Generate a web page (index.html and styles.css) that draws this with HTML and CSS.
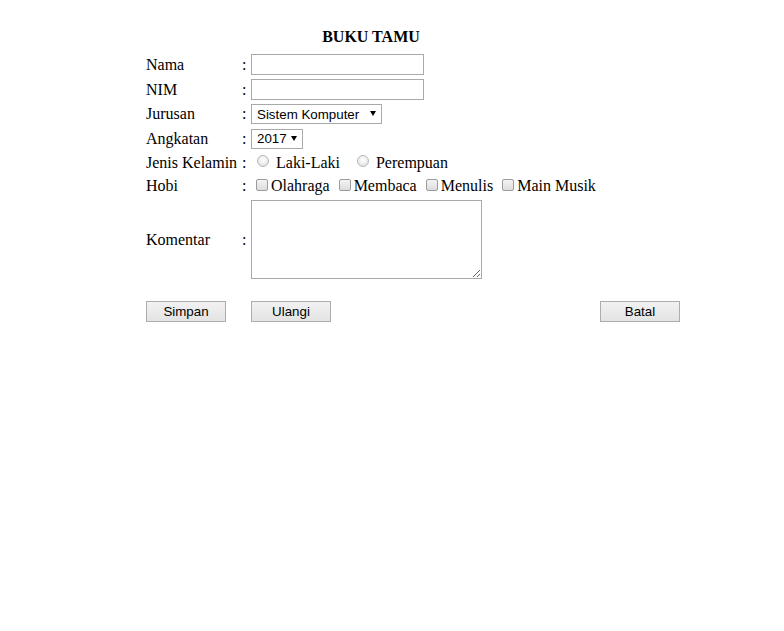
FILE: index.html
```html
<!DOCTYPE html>
<html>
<head>
<meta charset="utf-8">
<title>Buku Tamu</title>
<link rel="stylesheet" href="styles.css">
</head>
<body>
<div class="page">
  <h1 class="title">BUKU TAMU</h1>
  <form class="form">
    <div class="lbl r1">Nama</div><div class="colon r1">:</div>
    <div class="field r1"><input class="text" type="text"></div>

    <div class="lbl r2">NIM</div><div class="colon r2">:</div>
    <div class="field r2"><input class="text" type="text"></div>

    <div class="lbl r3">Jurusan</div><div class="colon r3">:</div>
    <div class="field r3"><select class="sel sel-jur"><option>Sistem Komputer</option></select></div>

    <div class="lbl r4">Angkatan</div><div class="colon r4">:</div>
    <div class="field r4"><select class="sel sel-year"><option>2017</option></select></div>

    <div class="lbl r5">Jenis Kelamin</div><div class="colon r5">:</div>
    <div class="field r5"><label class="opt"><input class="radio" type="radio" name="jk"> Laki-Laki</label> <label class="opt"><input class="radio" type="radio" name="jk"> Perempuan</label></div>

    <div class="lbl r6">Hobi</div><div class="colon r6">:</div>
    <div class="field r6"><label class="opt"><input class="check" type="checkbox">Olahraga</label> <label class="opt"><input class="check" type="checkbox">Membaca</label> <label class="opt"><input class="check" type="checkbox">Menulis</label> <label class="opt"><input class="check" type="checkbox">Main Musik</label></div>

    <div class="lbl r7">Komentar</div><div class="colon r7">:</div>
    <div class="field r7"><textarea class="area"></textarea></div>

    <div class="lbl r8"><button type="button" class="btn">Simpan</button></div>
    <div class="colon r8"></div>
    <div class="field r8 btnrow"><button type="button" class="btn">Ulangi</button><button type="button" class="btn">Batal</button></div>
  </form>
</div>
</body>
</html>
```

FILE: styles.css
```css
html, body {
  margin: 0;
  padding: 0;
  background: #ffffff;
}
body {
  font-family: "Liberation Serif", "Times New Roman", serif;
  font-size: 16px;
  color: #000;
}
.page {
  padding: 28px 0 0 146px;
}
.title {
  margin: 0;
  width: 450px;
  text-align: center;
  font-size: 16px;
  line-height: 18px;
  font-weight: bold;
}
.form {
  margin-top: 6px;
  display: grid;
  grid-template-columns: 96px 9px 429px;
  grid-template-rows: 25px 25px 24px 25px 23px 24px 83px 20px 21px;
  align-items: center;
}
.r8 { grid-row: 9; }
.lbl, .colon, .field {
  line-height: 18px;
  white-space: nowrap;
}
.field {
  display: flex;
  align-items: center;
}
.text {
  box-sizing: border-box;
  width: 173px;
  height: 21px;
  margin: 0;
  border: 1px solid #a9a9a9;
  padding: 1px 2px;
  font-family: "Liberation Sans", Arial, sans-serif;
  font-size: 13.33px;
  background: #fff;
}
.sel {
  -webkit-appearance: none;
  appearance: none;
  box-sizing: border-box;
  height: 20px;
  margin: 0;
  border: 1px solid #a9a9a9;
  border-radius: 0;
  padding: 0 0 0 5px;
  font-family: "Liberation Sans", Arial, sans-serif;
  font-size: 13.33px;
  color: #000;
  background-color: #fff;
  background-image: url("data:image/svg+xml;utf8,<svg xmlns='http://www.w3.org/2000/svg' width='6' height='5'><path d='M0 0 L6 0 L3 5 Z' fill='black'/></svg>");
  background-repeat: no-repeat;
}
.sel-jur {
  width: 131px;
  background-position: 118px 6px;
}
.sel-year {
  width: 52px;
  background-position: 39px 6px;
}
.opt {
  display: inline-flex;
  align-items: center;
  white-space: pre;
}
.r5 .opt + .opt { margin-left: 11px; }
.r6 .opt + .opt { margin-left: 4px; }
.radio {
  -webkit-appearance: none;
  appearance: none;
  box-sizing: border-box;
  width: 12px;
  height: 12px;
  margin: 0 3px 3px 6px;
  border: 1px solid #b9b9b9;
  border-radius: 50%;
  background: radial-gradient(circle at 50% 40%, #ffffff 0%, #f0f0f0 45%, #d6d6d6 100%);
}
.check {
  -webkit-appearance: none;
  appearance: none;
  box-sizing: border-box;
  width: 12px;
  height: 12px;
  margin: 0 3px 2px 5px;
  border: 1px solid #9c9c9c;
  border-radius: 2px;
  background: linear-gradient(#f4f4f4, #dcdcdc);
}
.area {
  box-sizing: border-box;
  width: 231px;
  height: 79px;
  margin: 0;
  border: 1px solid #a9a9a9;
  padding: 2px;
  font-family: "Liberation Mono", monospace;
  font-size: 13.33px;
  background: #fff;
}
.btn {
  box-sizing: border-box;
  width: 80px;
  height: 21px;
  margin: 0;
  padding: 0;
  border: 1px solid #adadad;
  border-radius: 0;
  background: linear-gradient(#f2f2f2, #e3e3e3);
  font-family: "Liberation Sans", Arial, sans-serif;
  font-size: 13.33px;
  color: #000;
  line-height: 19px;
}
.btnrow {
  justify-content: space-between;
}
```
